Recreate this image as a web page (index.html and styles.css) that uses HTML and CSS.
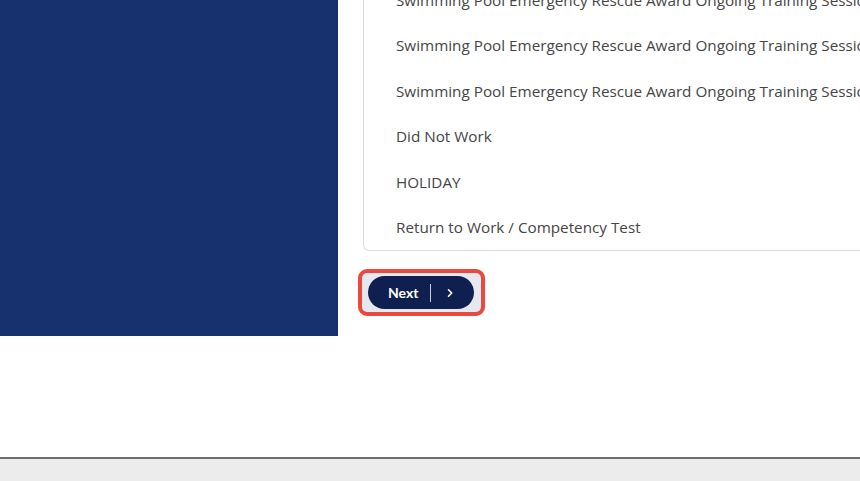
FILE: index.html
```html
<!DOCTYPE html>
<html lang="en">
<head>
    <meta charset="UTF-8">
    <meta name="viewport" content="width=device-width, initial-scale=1.0">
    <title>Select Session</title>
    <link rel="stylesheet" href="styles.css">
</head>
<body>
    <div class="page">
        <div class="main">
            <!-- Left brand panel -->
            <div class="side-panel"></div>

            <div class="content">
                <ul class="option-list">
                    <li class="option-item">Swimming Pool Emergency Rescue Award Ongoing Training Session</li>
                    <li class="option-item">Swimming Pool Emergency Rescue Award Ongoing Training Session</li>
                    <li class="option-item">Swimming Pool Emergency Rescue Award Ongoing Training Session</li>
                    <li class="option-item">Did Not Work</li>
                    <li class="option-item">HOLIDAY</li>
                    <li class="option-item">Return to Work / Competency Test</li>
                </ul>

                <div class="highlight">
                    <button class="next-btn">
                        <span class="next-label">Next</span>
                        <span class="next-divider"></span>
                        <svg class="next-icon" width="10" height="10" viewBox="0 0 10 10">
                            <path d="M3.5 1.8 L6.7 5 L3.5 8.2" fill="none" stroke="#fff" stroke-width="1.6" stroke-linecap="round" stroke-linejoin="round"/>
                        </svg>
                    </button>
                </div>
            </div>
        </div>

        <div class="footer"></div>
    </div>
</body>
</html>
```

FILE: styles.css
```css
/* Page layout */
body {
    margin: 0;
    padding: 0;
    background-color: #fff;
    font-family: 'Open Sans', 'Noto Sans', sans-serif;
    overflow: hidden;
}
.page {
    height: 100vh;
    display: flex;
    flex-direction: column;
}
.main {
    flex: 1;
    display: flex;
    align-items: flex-start;
}
.side-panel {
    width: 338px;
    height: 336px;
    flex-shrink: 0;
    background-color: #17316f;
}
.content {
    flex: 1;
    min-width: 0;
    padding-left: 25px;
}
.option-list {
    list-style: none;
    margin: -23px 0 0 0;
    padding: 0;
    border: 1px solid #dcdcdc;
    border-right: none;
    border-radius: 0 0 0 6px;
}
.option-item {
    height: 45.4px;
    line-height: 45.4px;
    padding-left: 32px;
    font-size: 15.25px;
    color: #454545;
    white-space: nowrap;
    overflow: hidden;
}
.highlight {
    display: inline-block;
    margin: 18px 0 0 -5px;
    padding: 3px 7px 3px 6px;
    border: 4px solid #ea4a3e;
    border-radius: 9px;
    background-color: #e6e8ef;
}
.next-btn {
    display: flex;
    align-items: center;
    width: 106px;
    height: 33px;
    padding: 0 0 0 20px;
    border: none;
    border-radius: 17px;
    background-color: #0f1f50;
    color: #fff;
    font-family: 'Lato', sans-serif;
    font-weight: bold;
    font-size: 14px;
    cursor: pointer;
}
.next-label {
    display: block;
}
.next-divider {
    width: 1px;
    height: 18px;
    margin: 0 14px 0 12px;
    background-color: #c9cde0;
}
.next-icon {
    display: block;
}
.footer {
    height: 22px;
    border-top: 2px solid #6e6e6e;
    background-color: #ececec;
}
```
